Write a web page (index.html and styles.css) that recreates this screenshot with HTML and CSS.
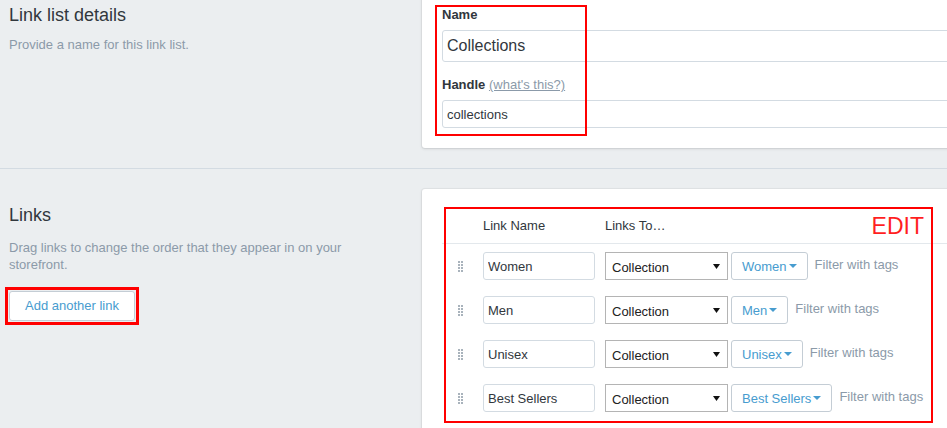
FILE: index.html
```html
<!DOCTYPE html>
<html lang="en">
<head>
<meta charset="utf-8">
<title>Link list details</title>
<link rel="stylesheet" href="styles.css">
</head>
<body>
<div class="page">
  <section class="section section--details">
    <div class="annotation annotation--details">
      <h2 class="annotation-title">Link list details</h2>
      <p class="annotation-desc">Provide a name for this link list.</p>
    </div>
    <div class="card card--details">
      <div class="mark mark--fields"></div>
      <div class="field">
        <label class="label">Name</label>
        <input class="input input--lg" type="text" value="Collections">
      </div>
      <div class="field">
        <label class="label">Handle <a class="help">(what's this?)</a></label>
        <input class="input input--md" type="text" value="collections">
      </div>
    </div>
  </section>

  <section class="section section--links">
    <div class="annotation annotation--links">
      <h2 class="annotation-title">Links</h2>
      <p class="annotation-desc">Drag links to change the order that they appear in on your storefront.</p>
      <div class="btn-mark"><button class="btn" type="button">Add another link</button></div>
    </div>
    <div class="card card--links">
      <div class="mark mark--edit"><span class="mark-text">EDIT</span></div>
      <div class="links-head">
        <span class="col-name">Link Name</span>
        <span class="col-to">Links To…</span>
      </div>
      <div class="links-rows">
        <div class="link-row">
          <span class="drag"><i></i><i></i><i></i><i></i><i></i><i></i><i></i><i></i></span>
          <input class="input input--sm" type="text" value="Women">
          <div class="select"><span>Collection</span><svg class="select-arrow" width="7" height="5" viewBox="0 0 7 5"><polygon points="0,0 7,0 3.5,5" fill="#111"/></svg></div>
          <span class="tag-btn">Women<span class="caret"></span></span>
          <span class="filter">Filter with tags</span>
        </div>
        <div class="link-row">
          <span class="drag"><i></i><i></i><i></i><i></i><i></i><i></i><i></i><i></i></span>
          <input class="input input--sm" type="text" value="Men">
          <div class="select"><span>Collection</span><svg class="select-arrow" width="7" height="5" viewBox="0 0 7 5"><polygon points="0,0 7,0 3.5,5" fill="#111"/></svg></div>
          <span class="tag-btn">Men<span class="caret"></span></span>
          <span class="filter">Filter with tags</span>
        </div>
        <div class="link-row">
          <span class="drag"><i></i><i></i><i></i><i></i><i></i><i></i><i></i><i></i></span>
          <input class="input input--sm" type="text" value="Unisex">
          <div class="select"><span>Collection</span><svg class="select-arrow" width="7" height="5" viewBox="0 0 7 5"><polygon points="0,0 7,0 3.5,5" fill="#111"/></svg></div>
          <span class="tag-btn">Unisex<span class="caret"></span></span>
          <span class="filter">Filter with tags</span>
        </div>
        <div class="link-row">
          <span class="drag"><i></i><i></i><i></i><i></i><i></i><i></i><i></i><i></i></span>
          <input class="input input--sm" type="text" value="Best Sellers">
          <div class="select"><span>Collection</span><svg class="select-arrow" width="7" height="5" viewBox="0 0 7 5"><polygon points="0,0 7,0 3.5,5" fill="#111"/></svg></div>
          <span class="tag-btn">Best Sellers<span class="caret"></span></span>
          <span class="filter">Filter with tags</span>
        </div>
      </div>
    </div>
  </section>
</div>
</body>
</html>
```

FILE: styles.css
```css
html, body {
  margin: 0;
  padding: 0;
  overflow: hidden;
  background: #ebeef0;
}

body {
  font-family: "Liberation Sans", Arial, sans-serif;
  font-size: 13px;
  color: #31373d;
}

.page {
  width: 1100px;
}

.section {
  display: flex;
  align-items: flex-start;
}

.section--details {
  padding-bottom: 20px;
}

.section--links {
  border-top: 1px solid #d3dbe2;
  padding-top: 20px;
}

.annotation {
  width: 413px;
  padding-left: 9px;
  flex: none;
}

.annotation--details {
  padding-top: 3px;
}

.annotation--links {
  padding-top: 14px;
}

.annotation-title {
  margin: 0;
  font-size: 18px;
  font-weight: normal;
  line-height: 24px;
  color: #31373d;
}

.annotation-desc {
  margin: 9px 0 0;
  max-width: 370px;
  font-size: 13px;
  line-height: 17.3px;
  color: #8b9aa9;
}

.annotation--links .annotation-desc {
  margin-top: 12px;
}

.btn-mark {
  display: inline-block;
  margin: 13px 0 0 -4px;
  padding: 1px;
  border: 3px solid #f00;
}

.btn {
  display: block;
  height: 30px;
  padding: 0 15px;
  border: 1px solid #c4cdd5;
  border-radius: 3px;
  background: #fff;
  color: #479ccf;
  font-family: inherit;
  font-size: 13px;
  line-height: 28px;
}

.card {
  position: relative;
  flex: none;
  width: 640px;
  background: #fff;
  box-shadow: 0 0 0 1px rgba(63, 63, 68, 0.05), 0 1px 3px rgba(63, 63, 68, 0.15);
}

.card--details {
  margin-top: -12px;
  padding: 19px 0 20px 20px;
  border-radius: 0 0 0 3px;
}

.card--links {
  padding: 18px 0 40px 20px;
  border-radius: 3px 0 0 0;
}

.field + .field {
  margin-top: 15px;
}

.label {
  display: block;
  margin-bottom: 7px;
  font-size: 13px;
  line-height: 16px;
  font-weight: bold;
  color: #31373d;
}

.help {
  font-weight: normal;
  color: #8b9aa9;
  text-decoration: underline;
}

.input {
  display: block;
  box-sizing: border-box;
  margin: 0;
  border: 1px solid #d3dbe2;
  border-radius: 3px;
  background: #fff;
  font-family: inherit;
  color: #31373d;
  outline: none;
}

.input--lg {
  width: 100%;
  height: 32px;
  padding: 0 4px;
  font-size: 16px;
}

.input--md {
  width: 100%;
  height: 28px;
  padding: 0 4px;
  font-size: 13px;
}

.input--sm {
  flex: none;
  width: 112px;
  height: 28px;
  padding: 0 4px;
  font-size: 13px;
}

.mark {
  position: absolute;
  box-sizing: border-box;
  border: 2px solid #f00;
  pointer-events: none;
}

.mark--fields {
  left: 13px;
  top: 17px;
  width: 152px;
  height: 131px;
}

.mark--edit {
  left: 22px;
  top: 18px;
  width: 489px;
  height: 216px;
}

.mark-text {
  position: absolute;
  top: 6px;
  right: 7px;
  font-size: 23px;
  line-height: 23px;
  color: #ff1f1f;
}

.links-head {
  display: flex;
  align-items: center;
  height: 36px;
  padding-left: 41px;
  border-bottom: 1px solid #e3e8ec;
  color: #31373d;
}

.col-name {
  width: 122px;
}

.links-rows {
  display: flex;
  flex-direction: column;
  gap: 16px;
  padding-top: 8px;
}

.link-row {
  display: flex;
  align-items: center;
  height: 28px;
}

.drag {
  display: grid;
  grid-template-columns: 2px 2px;
  grid-auto-rows: 2px;
  gap: 1px;
  width: 25px;
  padding-left: 16px;
  flex: none;
}

.drag i {
  display: block;
  background: #a9b3bc;
}

.select {
  display: flex;
  align-items: center;
  justify-content: space-between;
  box-sizing: border-box;
  flex: none;
  width: 123px;
  height: 28px;
  margin-left: 10px;
  padding: 3px 7px 0 6px;
  border: 1px solid #b4b4b4;
  background: #fff;
  color: #222;
  font-size: 13px;
}

.select-arrow {
  margin-top: -3px;
}

.tag-btn {
  display: flex;
  align-items: center;
  box-sizing: border-box;
  flex: none;
  height: 28px;
  margin-left: 3px;
  padding: 0 10px;
  border: 1px solid #c4cdd5;
  border-radius: 3px;
  background: #fff;
  color: #479ccf;
  font-size: 13px;
}

.caret {
  width: 0;
  height: 0;
  margin-left: 2px;
  border-left: 4px solid transparent;
  border-right: 4px solid transparent;
  border-top: 4px solid #479ccf;
}

.filter {
  margin-left: 7px;
  padding-bottom: 3px;
  color: #8b9aa9;
  font-size: 13px;
}
```
